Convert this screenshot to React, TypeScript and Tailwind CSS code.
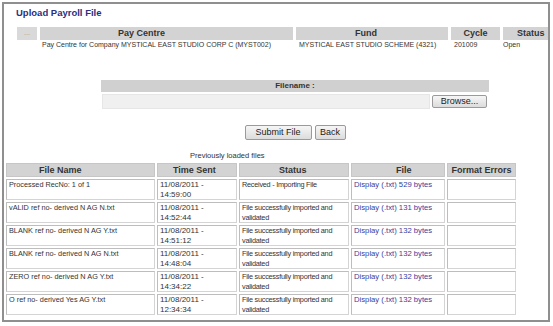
import React from "react";

const rows = [
  { name: "Processed RecNo: 1 of 1", time: "14:59:00", s1: "Received - Importing File", s2: "", bytes: "529" },
  { name: "vALID ref no- derived N AG N.txt", time: "14:52:44", s1: "File successfully imported and", s2: "validated", bytes: "131" },
  { name: "BLANK ref no- derived N AG Y.txt", time: "14:51:12", s1: "File successfully imported and", s2: "validated", bytes: "132" },
  { name: "BLANK ref no- derived N AG N.txt", time: "14:48:04", s1: "File successfully imported and", s2: "validated", bytes: "132" },
  { name: "ZERO ref no- derived N AG Y.txt", time: "14:34:22", s1: "File successfully imported and", s2: "validated", bytes: "132" },
  { name: "O ref no- derived Yes AG Y.txt", time: "12:34:34", s1: "File successfully imported and", s2: "validated", bytes: "132" },
];

const cell = "shrink-0 h-[21px] border border-[#d4d4d4] border-t-[#bdbdbd] border-l-[#bdbdbd] pl-[2px] leading-[9.5px] text-[#333] overflow-hidden whitespace-nowrap";
const head = "shrink-0 h-[14px] bg-[#d3d3d3] border border-[#c6c6c6] font-bold text-[9px] leading-[12px] text-[#333] whitespace-nowrap";

export default function App() {
  return (
    <div className="w-[553px] h-[326px] bg-white overflow-hidden" style={{ fontFamily: '"Liberation Sans", Arial, sans-serif' }}>
      <div className="ml-[2px] mt-[2px] w-[548px] h-[320px] border-2 border-[#8f8f8f] overflow-hidden bg-white">
        {/* Title */}
        <div className="mt-[3px] ml-[12px] h-[12px] leading-[12px] text-[9.5px] font-bold text-[#2b2f80]">Upload Payroll File</div>

        {/* Pay centre header */}
        <div className="mt-[8px] ml-[13px] flex gap-[3px] h-[13px]">
          <div className="shrink-0 w-[20px] bg-[#d9d9d9] text-center text-[7px] leading-[11px] text-[#9a9a9a]">...</div>
          <div className="shrink-0 w-[253px] bg-[#d3d3d3] pl-[78px] font-bold text-[9px] leading-[13px] text-[#333]">Pay Centre</div>
          <div className="shrink-0 w-[152px] bg-[#d3d3d3] pl-[59px] font-bold text-[9px] leading-[13px] text-[#333]">Fund</div>
          <div className="shrink-0 w-[49px] bg-[#d3d3d3] text-center font-bold text-[9px] leading-[13px] text-[#333]">Cycle</div>
          <div className="shrink-0 w-[58px] bg-[#d3d3d3] pl-[14px] font-bold text-[9px] leading-[13px] text-[#333]">Status</div>
        </div>
        <div className="ml-[13px] flex gap-[3px] h-[9px] text-[7px] leading-[9px] text-[#333] whitespace-nowrap">
          <div className="shrink-0 w-[20px]"></div>
          <div className="shrink-0 w-[253px] pl-[2px]">Pay Centre for Company MYSTICAL EAST STUDIO CORP C (MYST002)</div>
          <div className="shrink-0 w-[152px] pl-[3px]">MYSTICAL EAST STUDIO SCHEME (4321)</div>
          <div className="shrink-0 w-[49px] pl-[3px]">201009</div>
          <div className="shrink-0 w-[58px]">Open</div>
        </div>

        {/* Filename */}
        <div className="mt-[31px] ml-[97px] w-[388px]">
          <div className="h-[12px] bg-[#d0d0d0] text-center font-bold text-[8px] leading-[12px] text-[#333]">Filename :</div>
          <div className="mt-[2px] flex items-center h-[15px]">
            <div className="ml-[1px] w-[328px] h-[15px] bg-[#f0f0f0] border border-[#e6e6e6]"></div>
            <button className="ml-[2px] w-[55px] h-[13px] rounded-[2px] border border-[#9a9a9a] bg-gradient-to-b from-[#f6f6f6] to-[#dcdcdc] text-[9px] leading-[11px] text-[#222]">Browse...</button>
          </div>
          <div className="mt-[16px] flex justify-center gap-[3px] h-[15px]">
            <button className="w-[67px] h-[15px] rounded-[2px] border border-[#9a9a9a] bg-gradient-to-b from-[#f6f6f6] to-[#dcdcdc] text-[9px] leading-[13px] text-[#222]">Submit File</button>
            <button className="w-[31px] h-[15px] rounded-[2px] border border-[#9a9a9a] bg-gradient-to-b from-[#f6f6f6] to-[#dcdcdc] text-[9px] leading-[13px] text-[#222]">Back</button>
          </div>
        </div>

        {/* Caption */}
        <div className="mt-[11px] pl-[186px] h-[10px] text-[7.5px] leading-[10px] text-[#333]">Previously loaded files</div>

        {/* History table */}
        <div className="mt-[2px] ml-[2px] flex flex-col gap-[2px]">
          <div className="flex gap-[2px]">
            <div className={`${head} w-[149px] pl-[32px]`}>File Name</div>
            <div className={`${head} w-[80px] pl-[15px]`}>Time Sent</div>
            <div className={`${head} w-[110px] pl-[39px]`}>Status</div>
            <div className={`${head} w-[94px] pl-[44px]`}>File</div>
            <div className={`${head} w-[69px] text-center`}>Format Errors</div>
          </div>
          {rows.map((r, i) => (
            <div key={i} className="flex gap-[2px]">
              <div className={`${cell} w-[149px] text-[7.3px]`}>{r.name}</div>
              <div className={`${cell} w-[80px] text-[8px]`}>11/08/2011 -<br />{r.time}</div>
              <div className={`${cell} w-[110px] text-[7.3px] tracking-[-0.25px]`}>{r.s1}{r.s2 && <><br />{r.s2}</>}</div>
              <div className={`${cell} w-[94px] text-[7.7px] !text-[#3a3d9c]`}>Display (.txt) {r.bytes} bytes</div>
              <div className={`${cell} w-[69px]`}></div>
            </div>
          ))}
        </div>
      </div>
    </div>
  );
}
